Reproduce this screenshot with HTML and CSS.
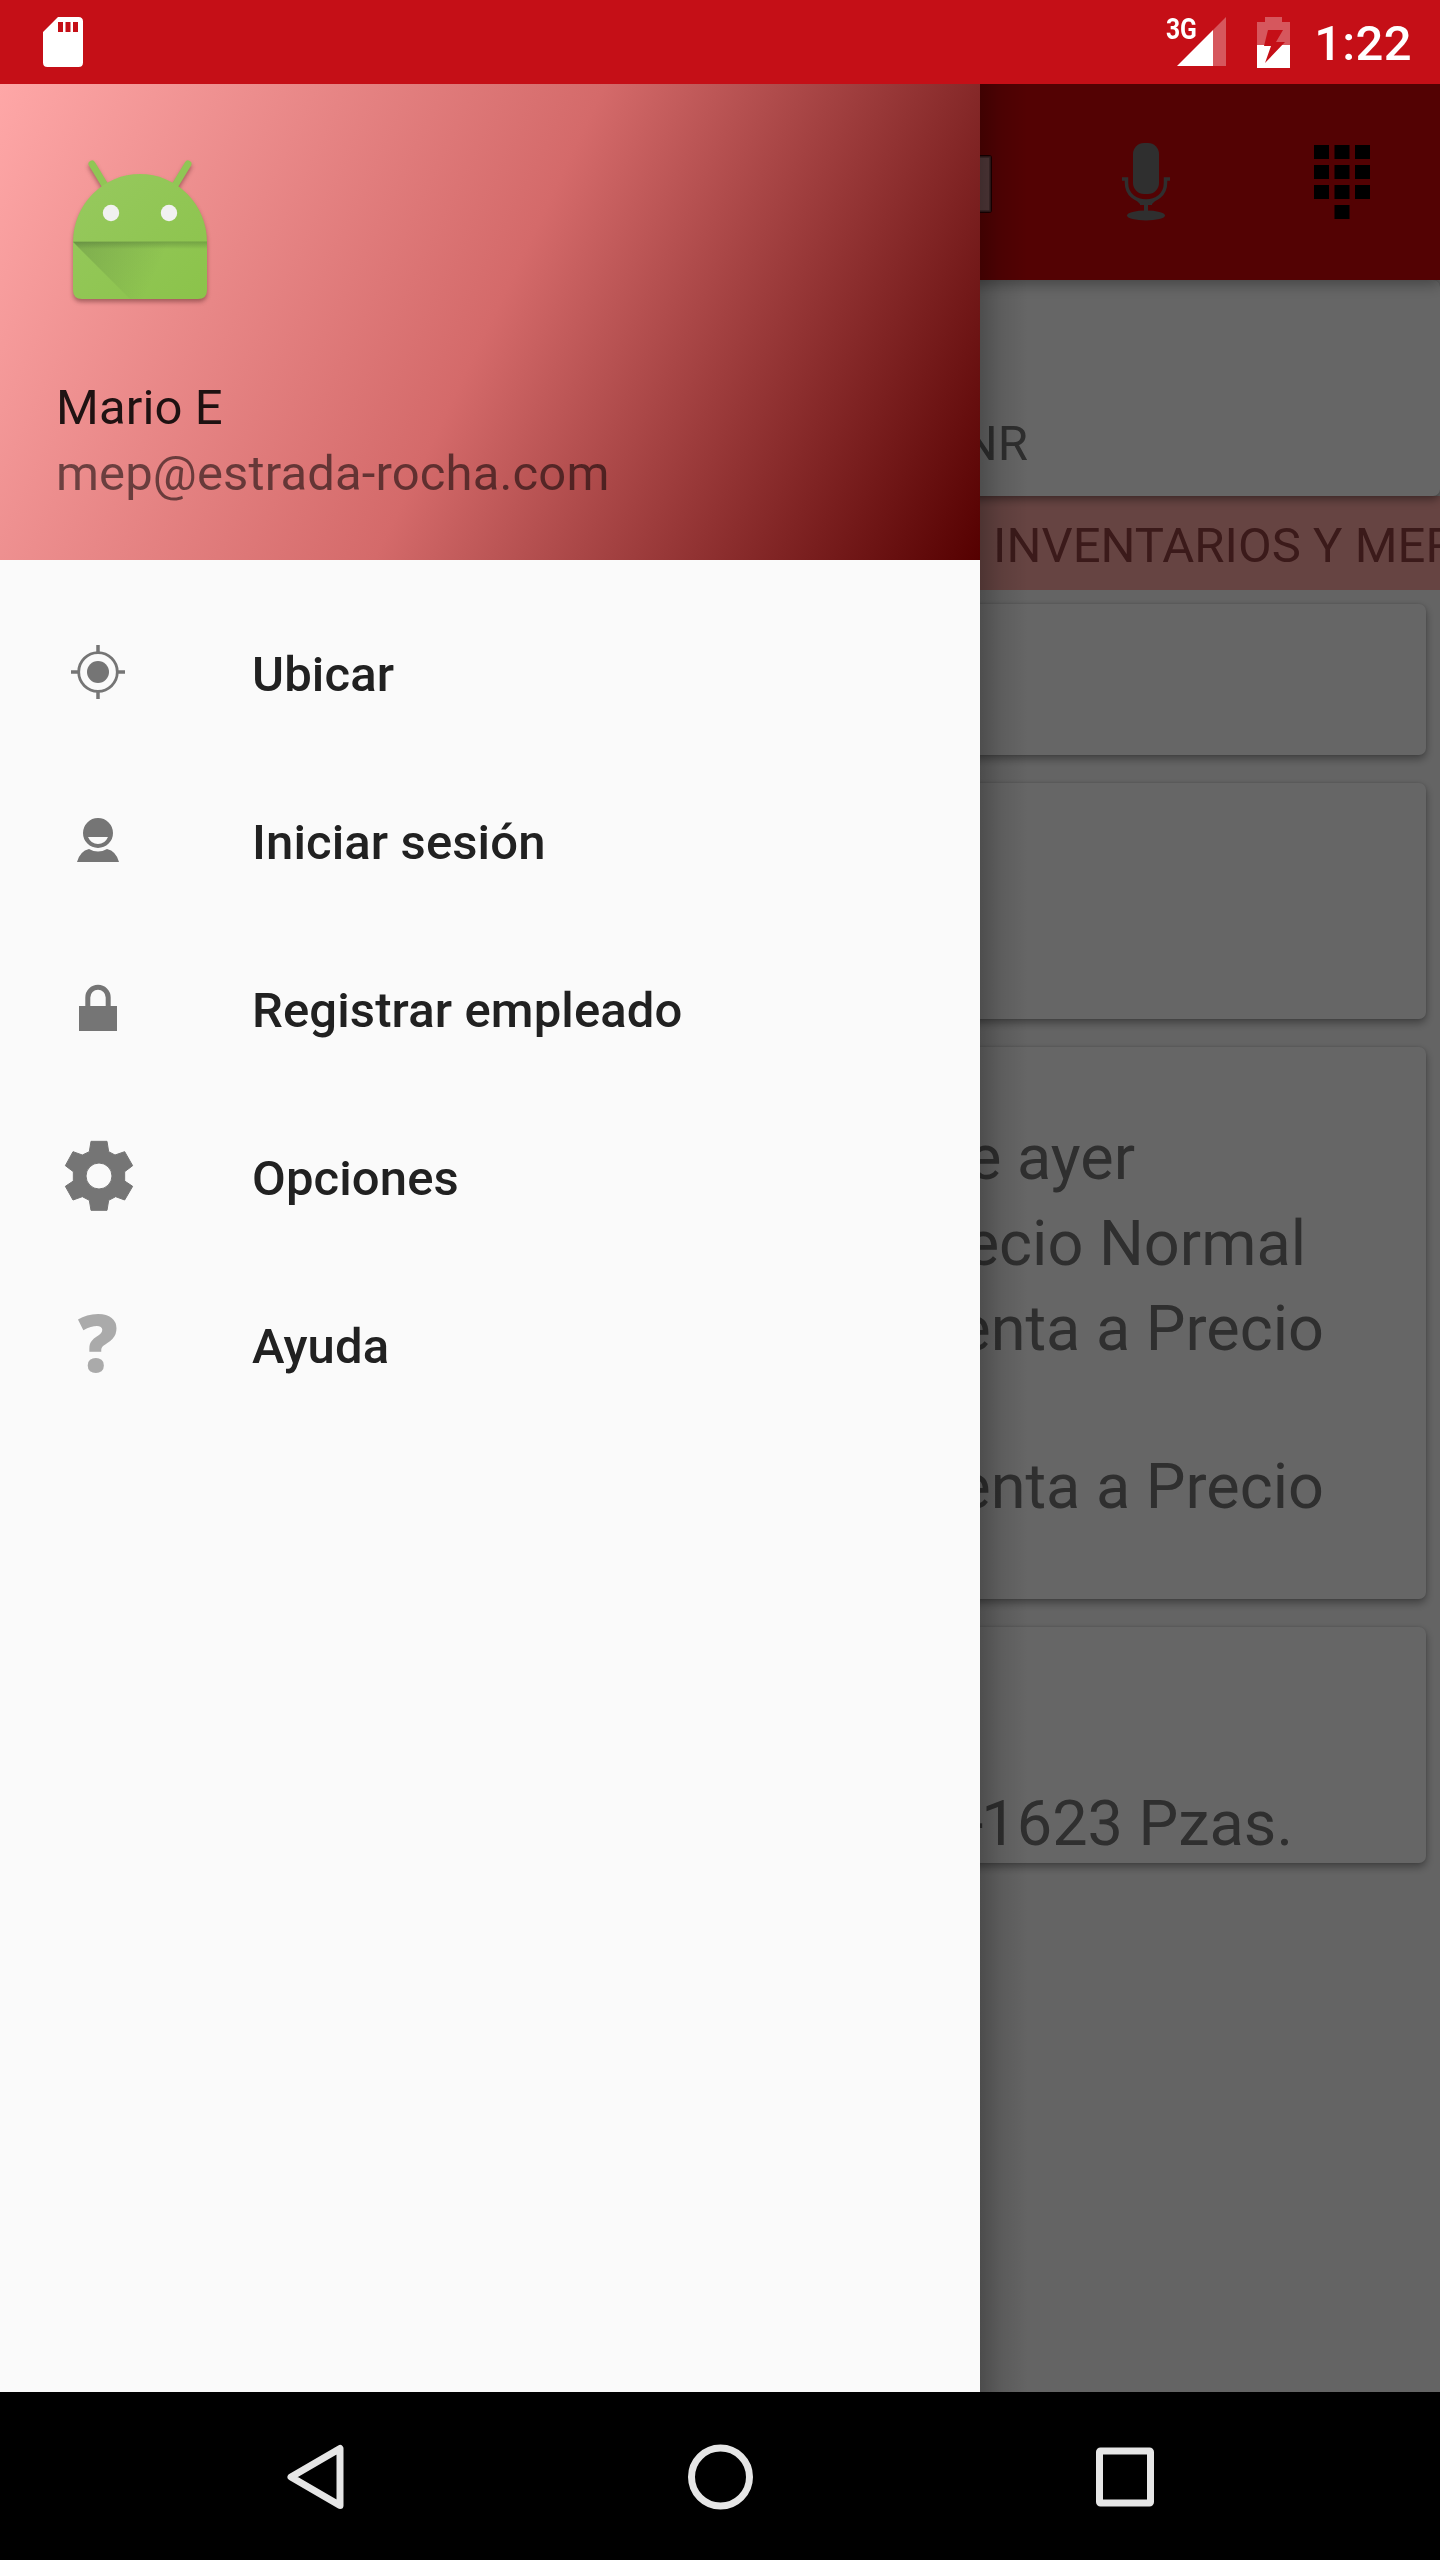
FILE: index.html
```html
<!DOCTYPE html>
<html lang="es">
<head>
<meta charset="utf-8">
<title>Inventarios</title>
<link rel="stylesheet" href="styles.css">
</head>
<body>
<div class="phone">
  <header class="status">
    <svg class="sd" width="40" height="50" viewBox="0 0 40 50"><path fill="#fff" fill-rule="evenodd" d="M15 0H35.500Q40 0 40 4.500V45.500Q40 50 35.500 50H4.500Q0 50 0 45.500V15ZM15 5V15H20V5ZM22.500 5V15H27.500V5ZM30 5V15H35V5Z"/></svg>
    <div class="indicators">
      <span class="network">3G</span>
      <svg class="signal" width="49" height="50" viewBox="0 0 49 50"><path fill="#fff" fill-opacity=".3" d="M36 13 49 0V49H36Z"/><path fill="#fff" d="M0 49 36 13V49Z"/></svg>
      <svg class="battery" width="33" height="51" viewBox="0 0 33 51"><path fill="#fff" fill-opacity=".3" d="M8 0H25V5H33V28H0V5H8Z"/><path fill="#fff" d="M0 28H33V51H0Z"/><path fill="#c50f17" d="M11 13H26L19 25H28L8 46L14 29H7Z"/></svg>
      <span class="clock">1:22</span>
    </div>
  </header>

  <div class="body">
    <main class="screen">
      <div class="toolbar">
        <svg class="scan" width="60" height="64" viewBox="0 0 60 64"><rect x="1" y="3" width="56" height="58" rx="3" fill="#400103"/><rect x="4" y="5" width="51" height="54" fill="#d29193" stroke="#8c5a5b" stroke-width="1.500"/></svg>
        <svg class="mic" width="48" height="78" viewBox="0 0 48 78"><g fill="#757575"><rect x="11" y="0" width="26" height="51" rx="11"/><path d="M14 57H34L29 62H26V68H22V62H19Z"/><path d="M18 57H30V62H18Z"/><ellipse cx="24" cy="72.500" rx="19" ry="5"/></g><path d="M0 36H4.500V40C4.500 64 43.500 64 43.500 40V36H48" fill="none" stroke="#757575" stroke-width="3.500"/></svg>
        <svg class="keypad" width="56" height="74" viewBox="0 0 56 74"><path d="M0 0H15V14H0ZM20.500 0H35.500V14H20.500ZM41 0H56V14H41ZM0 20H15V34H0ZM20.500 20H35.500V34H20.500ZM41 20H56V34H41ZM0 40H15V54H0ZM20.500 40H35.500V54H20.500ZM41 40H56V54H41ZM20.500 60H35.500V74H20.500Z"/></svg>
      </div>
      <section class="card summary"><p class="line small">NR</p></section>
      <div class="tabs">INVENTARIOS Y MERMAS</div>
      <div class="cards">
        <section class="card c1"></section>
        <section class="card c2"></section>
        <section class="card c3">
          <p class="line yesterday">e ayer</p>
          <p class="line normal">ecio Normal</p>
          <p class="line price">enta a Precio</p>
          <p class="line price last">enta a Precio</p>
        </section>
        <section class="card c4"><p class="line stock"><span class="minus">-</span>1623 Pzas.</p></section>
      </div>
    </main>
    <div class="scrim"></div>

    <aside class="drawer">
      <div class="profile">
        <svg class="avatar" width="168" height="168" viewBox="0 0 168 168">
          <defs>
            <linearGradient id="skin" x1="0" y1="0" x2="1" y2="1"><stop offset="0" stop-color="#97c95f"/><stop offset="1" stop-color="#8bc34a"/></linearGradient>
            <linearGradient id="fold" gradientUnits="userSpaceOnUse" x1="20" y1="100" x2="98" y2="135"><stop offset="0" stop-color="#33502a" stop-opacity=".22"/><stop offset="1" stop-color="#33502a" stop-opacity="0"/></linearGradient>
            <linearGradient id="lip" x1="0" y1="0" x2="0" y2="1"><stop offset="0" stop-color="#33502a" stop-opacity=".3"/><stop offset="1" stop-color="#33502a" stop-opacity="0"/></linearGradient>
          </defs>
          <g><path d="M36 22 50 45M132 22 118 45" stroke="#90c655" stroke-width="7" stroke-linecap="round"/>
          <path fill="url(#skin)" d="M17 100A67 68 0 0 1 151 100V148Q151 157 142 157H26Q17 157 17 148Z"/></g>
          <path fill="url(#fold)" d="M17 100H151V157H74Z"/>
          <path fill="url(#lip)" d="M17 99.500H151V107H24Z"/>
          <circle cx="55" cy="71" r="8.200" fill="#f1f1f1"/><circle cx="113" cy="71" r="8.200" fill="#f1f1f1"/>
        </svg>
        <p class="name">Mario E</p>
        <p class="email">mep@estrada-rocha.com</p>
      </div>
      <nav class="menu">
        <a class="item"><svg width="84" height="84" viewBox="0 0 84 84"><circle cx="42" cy="42" r="11" fill="#757575"/><g fill="none" stroke="#757575"><circle cx="42" cy="42" r="19.300" stroke-width="2.800"/><path stroke-width="3.500" d="M42 15V22M42 62V69M15 42H22M62 42H69"/></g></svg><span class="label">Ubicar</span></a>
        <a class="item"><svg width="84" height="84" viewBox="0 0 84 84"><path fill="#757575" fill-rule="evenodd" d="M42 20A15 15 0 1 1 42 50A15 15 0 1 1 42 20ZM32 39Q35 46 42 46Q49 46 52 39ZM33 51Q42 56 51 51Q60 53 63 64H21Q24 53 33 51Z"/></svg><span class="label">Iniciar sesión</span></a>
        <a class="item"><svg width="84" height="84" viewBox="0 0 84 84"><path fill="#757575" d="M23 40H61V65H23Z"/><path fill="none" stroke="#757575" stroke-width="5" d="M31.800 41V31.500A10.200 10.200 0 0 1 52.200 31.500V41"/></svg><span class="label">Registrar empleado</span></a>
        <a class="item"><svg width="84" height="84" viewBox="48 162 252 252"><path fill="#757575" stroke="#757575" stroke-width="3" stroke-linejoin="round" fill-rule="evenodd" d="M153 184H201L206 215L225 225L254 215L278 257L254 275V303L278 319L254 360L227 350L206 361L201 391H153L148 361L127 350L99 360L76 319L100 303V275L76 257L99 215L127 225L148 215ZM177 249A39 39 0 1 0 177 327A39 39 0 1 0 177 249Z"/></svg><span class="label">Opciones</span></a>
        <a class="item"><span class="help">?</span><span class="label">Ayuda</span></a>
      </nav>
    </aside>
  </div>

  <footer class="navbar">
    <svg width="66" height="66" viewBox="0 0 66 66"><path d="M57 4.500V61.500L8 33Z"/></svg>
    <svg width="66" height="66" viewBox="0 0 66 66"><circle cx="33.500" cy="33" r="29"/></svg>
    <svg width="66" height="66" viewBox="0 0 66 66"><rect x="8.500" y="7" width="51" height="52" rx="1"/></svg>
  </footer>
</div>
</body>
</html>
```
FILE: styles.css
```css
* { box-sizing: border-box; }
body { margin: 0; font-family: Roboto, sans-serif; }
p { margin: 0; }
svg { display: block; flex: none; }

.phone {
  width: 1440px;
  height: 2560px;
  display: grid;
  grid-template-rows: 84px 1fr 168px;
  overflow: hidden;
}

/* status bar */
.status {
  background: #c50f17;
  display: flex;
  justify-content: space-between;
  align-items: center;
  padding: 0 28px 0 43px;
  color: #fff;
}
.indicators { display: flex; align-items: center; }
.network {
  font-size: 30px;
  font-weight: 700;
  line-height: 30px;
  width: 38px;
  margin: 0 -27px 26px 0;
  transform: scaleX(.82);
  transform-origin: left;
}
.battery { margin: 0 24px 0 31px; }
.clock {
  font-size: 49px;
  font-weight: 500;
  line-height: 58px;
  letter-spacing: .35px;
  margin-top: 3px;
}

/* screen below the drawer */
.body { position: relative; overflow: hidden; background: #fafafa; }
.screen { display: flex; flex-direction: column; isolation: isolate; }
.toolbar {
  position: relative;
  z-index: 1;
  height: 196px;
  background: #d00508;
  box-shadow: 0 4px 14px rgba(0, 0, 0, .35);
  display: flex;
  align-items: center;
  justify-content: flex-end;
  padding-right: 70px;
}
.scan { margin: 3px 127px 0 0; }
.mic { margin-right: 144px; }
.card {
  background: #fff;
  border-radius: 7px;
  box-shadow: 0 4px 8px rgba(0, 0, 0, .36), 0 0 3px rgba(0, 0, 0, .12);
}
.summary { height: 216px; position: relative; padding-top: 135px; }
.line {
  color: #757575;
  font-size: 63px;
  line-height: 74px;
  text-align: right;
}
.line.small { font-size: 49px; line-height: 58px; padding-right: 412px; }
.tabs {
  height: 94px;
  background: #ffaaa5;
  color: #944242;
  font-size: 49px;
  line-height: 100px;
  letter-spacing: .05px;
  padding-left: 993px;
  white-space: nowrap;
  overflow: hidden;
}
.cards { display: flex; flex-direction: column; gap: 28px; padding: 14px; }
.c1 { height: 151px; }
.c2 { height: 236px; }
.c3 { height: 552px; padding-top: 74px; }
.c3 .line { margin-bottom: 11px; }
.c4 { height: 236px; padding-top: 160px; }
.yesterday { padding-right: 291px; }
.c3 .normal { padding-right: 120px; margin-top: 12px; }
.price { padding-right: 102px; }
.c3 .last { margin-top: 84px; }
.stock { padding-right: 133px; }
.minus { margin-right: -2px; }

.scrim { position: absolute; inset: 0; background: rgba(0, 0, 0, .6); }

/* drawer */
.drawer {
  position: absolute;
  inset: 0 auto 0 0;
  width: 980px;
  background: #fafafa;
}
.drawer::after {
  content: "";
  position: absolute;
  inset: 0 auto 0 100%;
  width: 48px;
  background: linear-gradient(90deg, rgba(0, 0, 0, .24), rgba(0, 0, 0, .09) 45%, transparent);
}
.profile {
  height: 476px;
  padding: 58px 56px 0;
  background: linear-gradient(115.9deg, #fea7a7, #d46a6a 50%, #550000);
  font-size: 49px;
  letter-spacing: .13px;
}
.avatar { filter: drop-shadow(0 3px 2px rgba(60, 20, 20, .4)); }
.name { line-height: 67px; margin-top: 64px; color: rgba(0, 0, 0, .87); }
.email { line-height: 65px; color: rgba(0, 0, 0, .54); }
.menu { padding-top: 28px; }
.item {
  height: 168px;
  padding-left: 56px;
  display: flex;
  align-items: center;
  gap: 112px;
  font-size: 49px;
  font-weight: 500;
  letter-spacing: .12px;
  color: #212121;
}
.label { padding-top: 4px; }
.help {
  width: 84px;
  padding-bottom: 4px;
  text-align: center;
  font: 800 79px/84px "Open Sans", sans-serif;
  color: #aaa;
}

/* navigation bar */
.navbar {
  background: #000;
  display: flex;
  justify-content: center;
  align-items: center;
  gap: 338px;
  padding-top: 1px;
}
.navbar svg { fill: none; stroke: #e6e6e6; stroke-width: 7; stroke-linejoin: round; }
```
